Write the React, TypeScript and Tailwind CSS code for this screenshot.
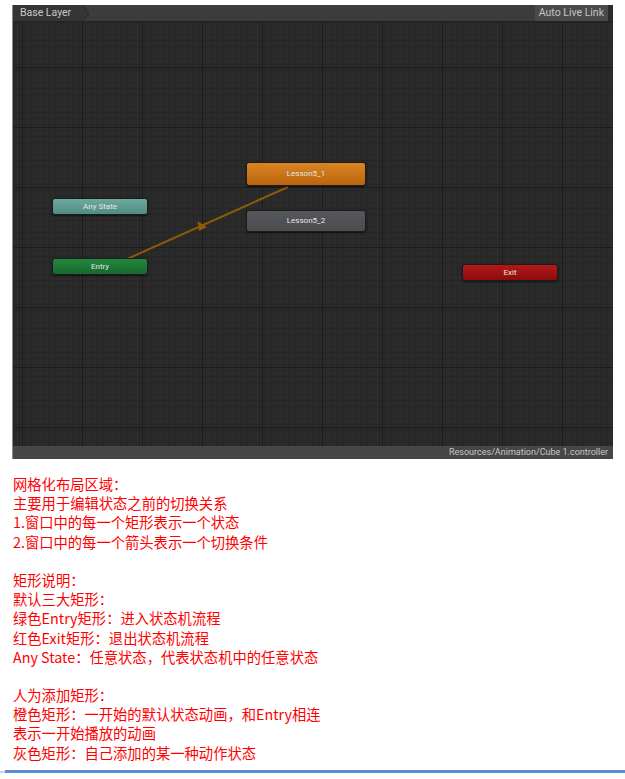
import React from "react";

function Grid() {
  return (
    <svg className="absolute inset-0 w-full h-full" xmlns="http://www.w3.org/2000/svg">
      <defs>
        <pattern id="minor" width="6" height="6" patternUnits="userSpaceOnUse" x="9" y="45">
          <path d="M0 0.5H6M0.5 0V6" stroke="#262626" strokeWidth="1" fill="none" />
        </pattern>
        <pattern id="major" width="60" height="60" patternUnits="userSpaceOnUse" x="9" y="45">
          <rect width="60" height="60" fill="url(#minor)" />
          <path d="M0 0.5H60M0.5 0V60" stroke="#1c1c1c" strokeWidth="1" fill="none" />
        </pattern>
      </defs>
      <rect width="100%" height="100%" fill="#2b2b2b" />
      <rect width="100%" height="100%" fill="url(#major)" />
      <line x1="114" y1="237" x2="275" y2="165" stroke="#8d5a08" strokeWidth="2" />
      <polygon points="184.5,199 194,205 186,209" fill="#8d5a08" />
    </svg>
  );
}

function Node({
  label,
  cls,
  left,
  top,
  w,
  h,
}: {
  label: string;
  cls: string;
  left: number;
  top: number;
  w: number;
  h: number;
}) {
  return (
    <div
      className={`absolute flex items-center justify-center rounded-[3px] border border-[#1c1c1c] shadow-[0_1px_2px_rgba(0,0,0,0.6)] text-[8px] text-[#e6e6e6] font-['Roboto',sans-serif] ${cls}`}
      style={{ left, top, width: w, height: h }}
    >
      {label}
    </div>
  );
}

export default function App() {
  const lines = [
    "网格化布局区域：",
    "主要用于编辑状态之前的切换关系",
    "1.窗口中的每一个矩形表示一个状态",
    "2.窗口中的每一个箭头表示一个切换条件",
    "",
    "矩形说明：",
    "默认三大矩形：",
    "绿色Entry矩形：进入状态机流程",
    "红色Exit矩形：退出状态机流程",
    "Any State：任意状态，代表状态机中的任意状态",
    "",
    "人为添加矩形：",
    "橙色矩形：一开始的默认状态动画，和Entry相连",
    "表示一开始播放的动画",
    "灰色矩形：自己添加的某一种动作状态",
  ];
  return (
    <div className="w-[625px] h-[779px] bg-white overflow-hidden relative">
      <div className="pt-[5px] pl-[12px]">
        <div className="w-[601px] h-[454px] flex flex-col border-l border-[#8a8a8a] bg-[#2b2b2b]">
          <div className="h-[17px] flex items-stretch bg-[#3c3c3c] border-b border-[#232323] font-['Roboto',sans-serif]">
            <div className="relative flex items-center pl-[7px] pr-[12px] bg-[#353535] text-[10.5px] text-[#c8c8c8]">
              Base Layer
              <svg className="absolute -right-[6px] top-0 h-[17px] w-[6px]" viewBox="0 0 6 17">
                <polygon points="0,0 6,8.5 0,17" fill="#353535" />
                <polyline points="0,0 6,8.5 0,17" fill="none" stroke="#2a2a2a" strokeWidth="1" />
              </svg>
            </div>
            <div className="flex-1" />
            <div className="flex items-center px-[4px] bg-[#4a4a4a] text-[10.5px] text-[#c4c4c4]">
              Auto Live Link
            </div>
            <div className="w-[5px] bg-[#2b2b2b]" />
          </div>
          <div className="relative flex-1 overflow-hidden">
            <Grid />
            <Node label="Any State" cls="bg-[linear-gradient(#6fa99f,#4f8c82)]" left={39} top={176} w={96} h={17} />
            <Node label="Entry" cls="bg-[linear-gradient(#23873d,#16692c)]" left={39} top={236} w={96} h={17} />
            <Node label="Lesson5_1" cls="bg-[linear-gradient(#dc8424,#b9650d)]" left={233} top={140} w={120} h={24} />
            <Node label="Lesson5_2" cls="bg-[linear-gradient(#55575c,#4a4c50)]" left={233} top={188} w={120} h={22} />
            <Node label="Exit" cls="bg-[linear-gradient(#b41818,#8c0c0c)]" left={449} top={242} w={96} h={17} />
          </div>
          <div className="h-[13px] flex items-center justify-end pr-[5px] bg-[#464646] text-[9px] text-[#c8c8c8] font-['Roboto',sans-serif]">
            Resources/Animation/Cube 1.controller
          </div>
        </div>
      </div>
      <div className="mt-[15px] pl-[13px] text-[14.3px] leading-[19.2px] text-[#ff0000] font-['Noto_Sans_CJK_SC',sans-serif]">
        {lines.map((l, i) => (
          <div key={i} className="h-[19.2px] whitespace-nowrap">
            {l}
          </div>
        ))}
      </div>
      <div className="absolute left-0 top-[771px] w-[5px] h-[2px] bg-[#c8d4e4]" />
      <div className="absolute left-[5px] right-0 top-[770px] h-[3px] bg-[#5b8fd4]" />
    </div>
  );
}
